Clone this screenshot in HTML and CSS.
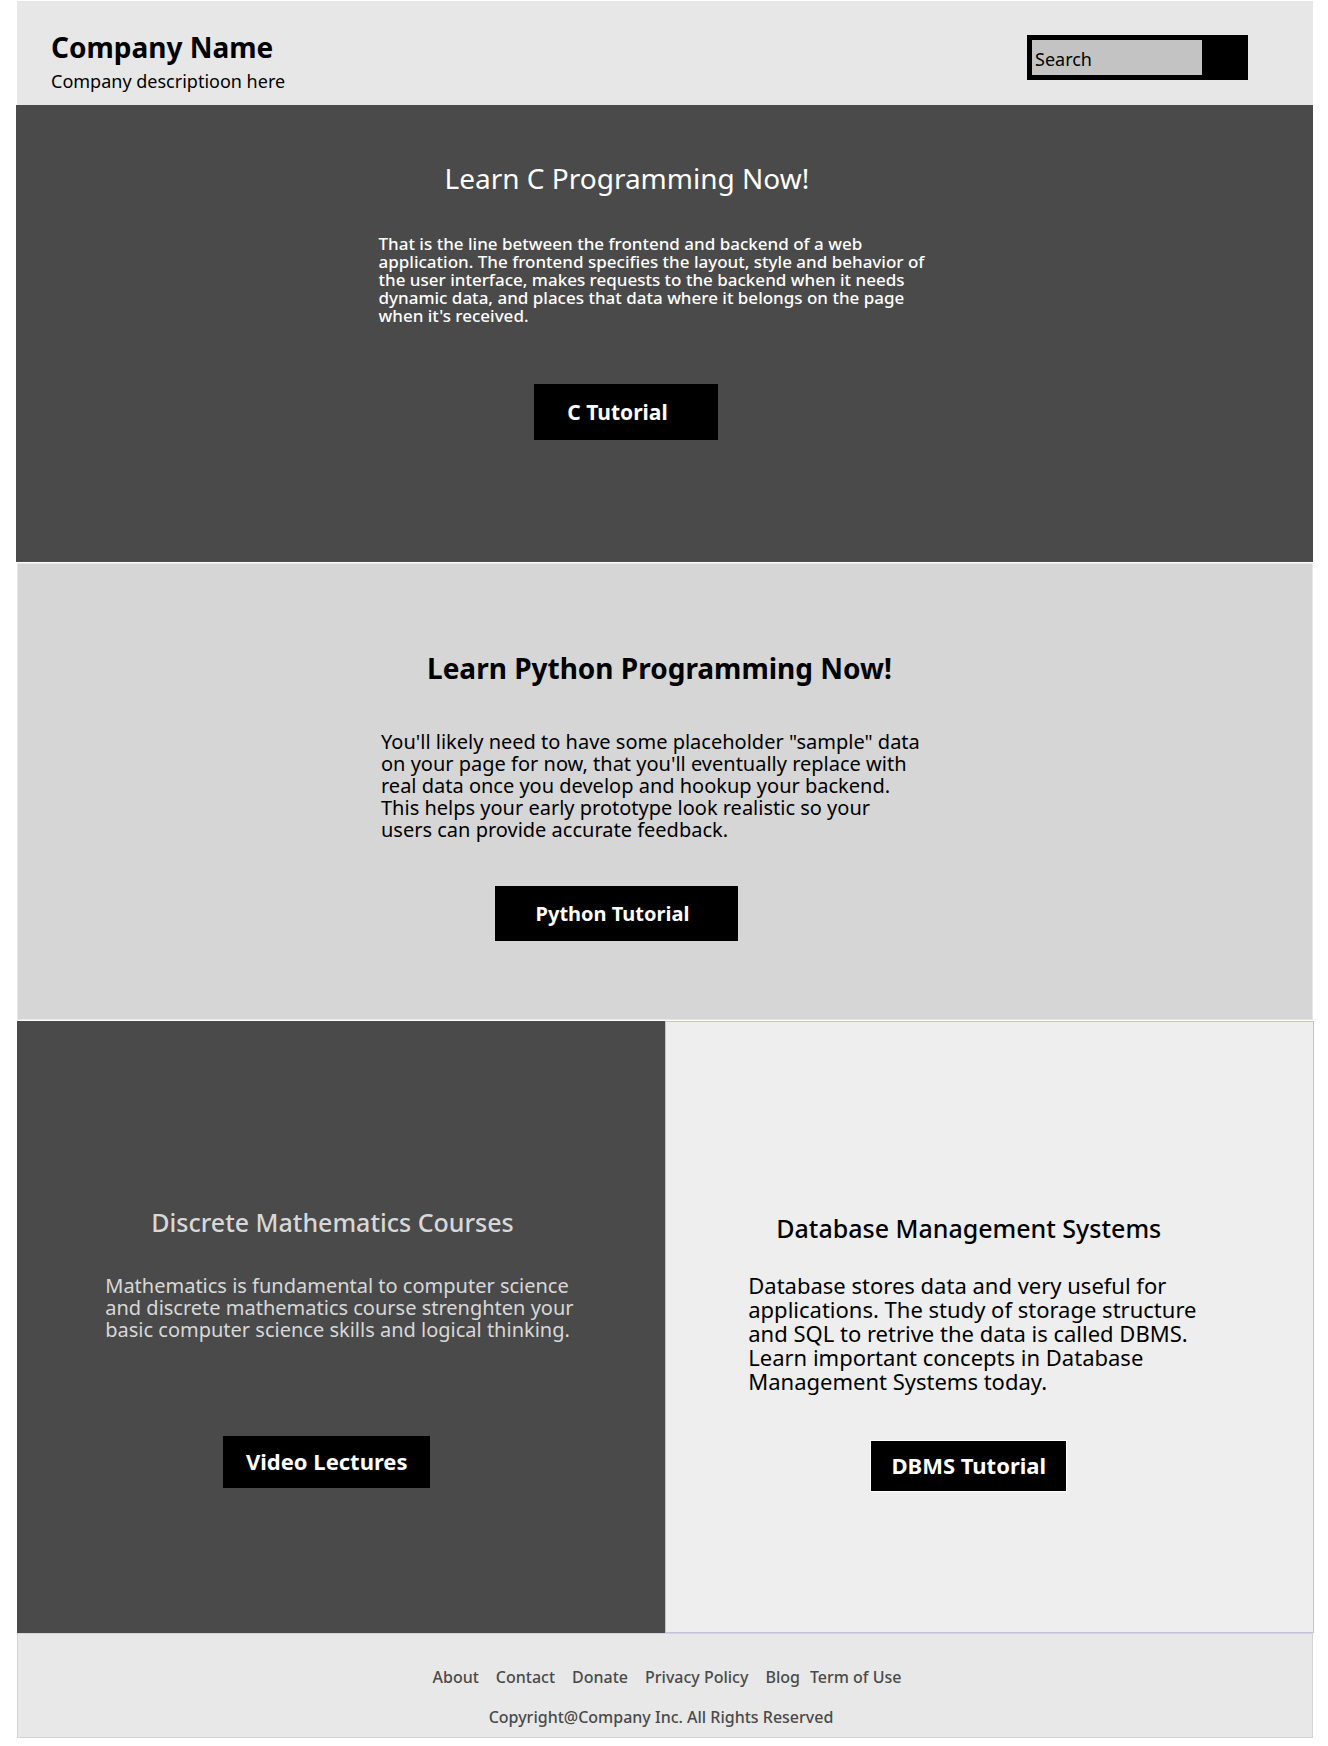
FILE: index.html
```html
<!DOCTYPE html>
<html lang="en">
<head>
<meta charset="utf-8">
<meta name="viewport" content="width=device-width, initial-scale=1">
<title>Company Name</title>
<link rel="stylesheet" href="styles.css">
</head>
<body>
<div class="page">
  <header class="site-header">
    <div class="brand">
      <h1 class="brand-name">Company Name</h1>
      <p class="brand-text">Company descriptioon here</p>
    </div>
    <form class="search">
      <input class="search-input" type="text" placeholder="Search" aria-label="Search">
      <button class="search-button" type="submit" aria-label="Submit search"></button>
    </form>
  </header>
  <main>
    <section class="panel panel-c">
      <div class="column">
        <h2 class="title">Learn C Programming Now!</h2>
        <p class="text">That is the line between the frontend and backend of a web application. The frontend specifies the layout, style and behavior of the user interface, makes requests to the backend when it needs dynamic data, and places that data where it belongs on the page when it's received.</p>
        <button class="action" type="button">C Tutorial</button>
      </div>
    </section>
    <section class="panel panel-python">
      <div class="column">
        <h2 class="title">Learn Python Programming Now!</h2>
        <p class="text">You'll likely need to have some placeholder "sample" data on your page for now, that you'll eventually replace with real data once you develop and hookup your backend. This helps your early prototype look realistic so your users can provide accurate feedback.</p>
        <button class="action" type="button">Python Tutorial</button>
      </div>
    </section>
    <div class="split">
      <section class="panel panel-math">
        <div class="column">
          <h2 class="title">Discrete Mathematics Courses</h2>
          <p class="text">Mathematics is fundamental to computer science and discrete mathematics course strenghten your basic computer science skills and logical thinking.</p>
          <button class="action" type="button">Video Lectures</button>
        </div>
      </section>
      <section class="panel panel-dbms">
        <div class="column">
          <h2 class="title">Database Management Systems</h2>
          <p class="text">Database stores data and very useful for applications. The study of storage structure and SQL to retrive the data is called DBMS. Learn important concepts in Database Management Systems today.</p>
          <button class="action" type="button">DBMS Tutorial</button>
        </div>
      </section>
    </div>
  </main>
  <footer class="site-footer">
    <nav class="links" aria-label="Footer">
      <a href="#">About</a>
      <a href="#">Contact</a>
      <a href="#">Donate</a>
      <a href="#">Privacy Policy</a>
      <span class="link-pair">
        <a href="#">Blog</a>
        <a href="#">Term of Use</a>
      </span>
    </nav>
    <p class="copyright">Copyright@Company Inc. All Rights Reserved</p>
  </footer>
</div>
</body>
</html>
```
FILE: styles.css
```css
* {
  box-sizing: border-box;
}

body,
h1,
h2,
p {
  margin: 0;
}

body {
  background: #fff;
  color: #000;
  font-family: "Noto Sans", "Open Sans", sans-serif;
}

button,
input {
  font: inherit;
}

.page {
  padding: 1px 15px 8px 17px;
}

/* Header */
.site-header {
  display: flex;
  justify-content: space-between;
  align-items: flex-start;
  min-height: 104px;
  padding: 30px 65px 12px 34px;
  background: #e7e7e7;
}

.brand-name {
  font-size: 28px;
  line-height: 32px;
  font-weight: 700;
}

.brand-text {
  margin-top: 6px;
  font-size: 18px;
  line-height: 24px;
}

.search {
  display: flex;
  margin-top: 4px;
  padding: 5px;
  background: #000;
}

.search-input {
  width: 170px;
  height: 35px;
  padding: 2px 3px 0;
  border: 0;
  border-radius: 0;
  background: #c3c3c3;
  color: #000;
  font-size: 18px;
}

.search-input::placeholder {
  color: #000;
  opacity: 1;
}

.search-button {
  width: 41px;
  padding: 0;
  border: 0;
  background: #000;
}

/* Course panels */
.column {
  display: flex;
  flex-direction: column;
  align-items: flex-start;
  margin: 0 auto;
}

.action {
  padding: 0;
  border: 0;
  background: #000;
  color: #fff;
  font-size: 21px;
  font-weight: 700;
}

.panel-c {
  min-height: 457px;
  margin-left: -1px;
  padding-top: 55px;
  background: #4a4a4a;
  color: #fff;
}

.panel-c .column,
.panel-python .column {
  max-width: 572px;
}

.panel-c .title,
.panel-python .title {
  font-size: 28px;
  line-height: 36px;
}

.panel-c .title {
  margin-left: 66px;
  font-weight: 400;
}

.panel-c .text {
  max-width: 560px;
  margin-top: 39px;
  font-size: 17px;
  line-height: 18px;
  font-weight: 500;
}

.panel-c .action {
  width: 184px;
  height: 56px;
  margin: 59px 0 0 155px;
  padding-right: 16px;
}

.panel-python {
  min-height: 457px;
  margin-top: 1px;
  padding-top: 86px;
  border: 1px solid #e7e7e7;
  background: #d6d6d6;
}

.panel-python .title {
  margin-left: 48px;
  font-weight: 700;
}

.panel-python .text {
  max-width: 542px;
  margin: 45px 0 0 2px;
  font-size: 20px;
  line-height: 22px;
}

.panel-python .action {
  width: 243px;
  height: 55px;
  margin: 45px 0 0 116px;
  padding-right: 8px;
  font-size: 20px;
}

.split {
  display: grid;
  grid-template-columns: 1fr 1fr;
  min-height: 612px;
  margin: 1px -1px 0 0;
}

.split .title {
  font-size: 25px;
  line-height: 32px;
  font-weight: 500;
}

.split .action {
  padding-bottom: 2px;
  font-size: 22px;
}

.panel-math {
  padding-top: 185px;
  background: #4a4a4a;
  color: #d8d8d8;
}

.panel-math .column {
  max-width: 472px;
}

.panel-math .title {
  margin-left: 46px;
}

.panel-math .text {
  margin-top: 37px;
  font-size: 20px;
  line-height: 22px;
}

.panel-math .action {
  width: 207px;
  height: 52px;
  margin: 95px 0 0 118px;
}

.panel-dbms {
  margin-left: -1px;
  padding-top: 190px;
  border: 1px solid #c5c0e0;
  background: #eee;
}

.panel-dbms .column {
  max-width: 482px;
}

.panel-dbms .title {
  margin-left: 28px;
}

.panel-dbms .text {
  margin-top: 29px;
  font-size: 22px;
  line-height: 24px;
}

.panel-dbms .action {
  width: 197px;
  height: 52px;
  margin: 47px 0 0 122px;
  border: 1px solid #fff;
}

/* Footer */
.site-footer {
  padding: 31px 0 8px;
  border: 1px solid #d4d4d4;
  background: #e8e8e8;
  color: #4a4a4a;
  font-size: 16px;
  line-height: 24px;
  font-weight: 500;
}

.links {
  display: flex;
  justify-content: center;
  gap: 17px;
  padding-left: 4px;
}

.link-pair {
  display: flex;
  gap: 10px;
}

.links a {
  color: inherit;
  text-decoration: none;
}

.copyright {
  margin-top: 16px;
  padding-right: 8px;
  text-align: center;
}
```
